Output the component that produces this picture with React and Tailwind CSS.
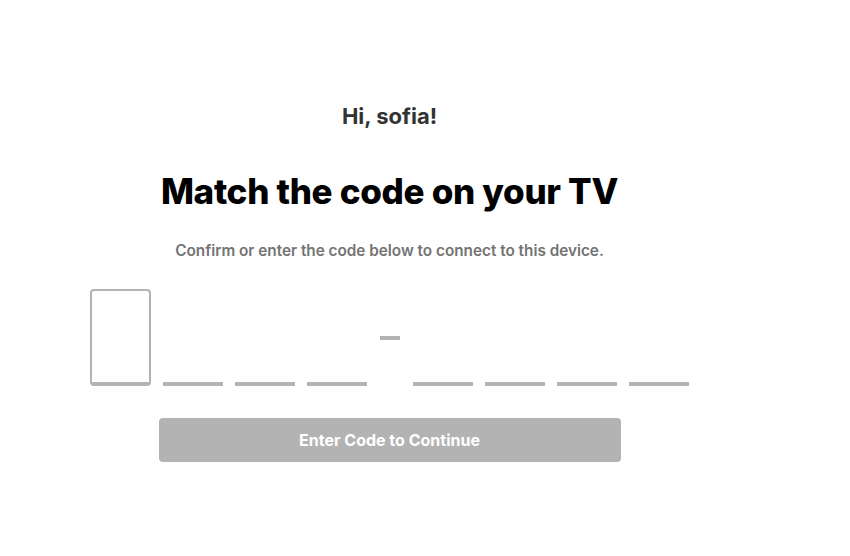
import React, { useState } from "react";

const SLOTS = 8;

function CodeSlot({ active }) {
  return (
    <div
      className={
        active
          ? "h-[97px] w-[61px] rounded-[4px] border-2 border-b-4 border-[#b3b3b3] bg-white"
          : "h-[97px] w-[60px] flex items-end"
      }
    >
      {!active && <div className="h-[4px] w-full bg-[#b3b3b3]" />}
    </div>
  );
}

export default function App() {
  const [code] = useState(Array(SLOTS).fill(""));

  return (
    <div
      className="min-h-[556px] w-[850px] bg-white"
      style={{ fontFamily: "Inter, 'Liberation Sans', sans-serif" }}
    >
      <div className="flex w-[779px] flex-col items-center pt-[103px]">
        <h2 className="text-[22px] font-bold leading-[26px] text-[#333333]">Hi, sofia!</h2>

        <h1 className="mt-[40px] text-[35px] font-extrabold leading-[44px] tracking-[-0.3px] text-black">
          Match the code on your TV
        </h1>

        <p className="mt-[28px] text-[15.3px] font-semibold leading-[20px] text-[#737373]">
          Confirm or enter the code below to connect to this device.
        </p>

        <div className="mt-[28px] flex items-end gap-[12px]">
          {code.slice(0, 4).map((_, i) => (
            <CodeSlot key={i} active={i === 0} />
          ))}
          {/* separator between the two halves of the code */}
          <div className="flex h-[97px] w-[22px] items-center justify-center">
            <div className="h-[4px] w-[20px] bg-[#b3b3b3]" />
          </div>
          {code.slice(4).map((_, i) => (
            <CodeSlot key={i + 4} />
          ))}
        </div>

        <button
          disabled
          className="mt-[32px] h-[44px] w-[462px] rounded-[4px] bg-[#b3b3b3] text-[16px] font-bold text-white"
        >
          Enter Code to Continue
        </button>
      </div>
    </div>
  );
}
